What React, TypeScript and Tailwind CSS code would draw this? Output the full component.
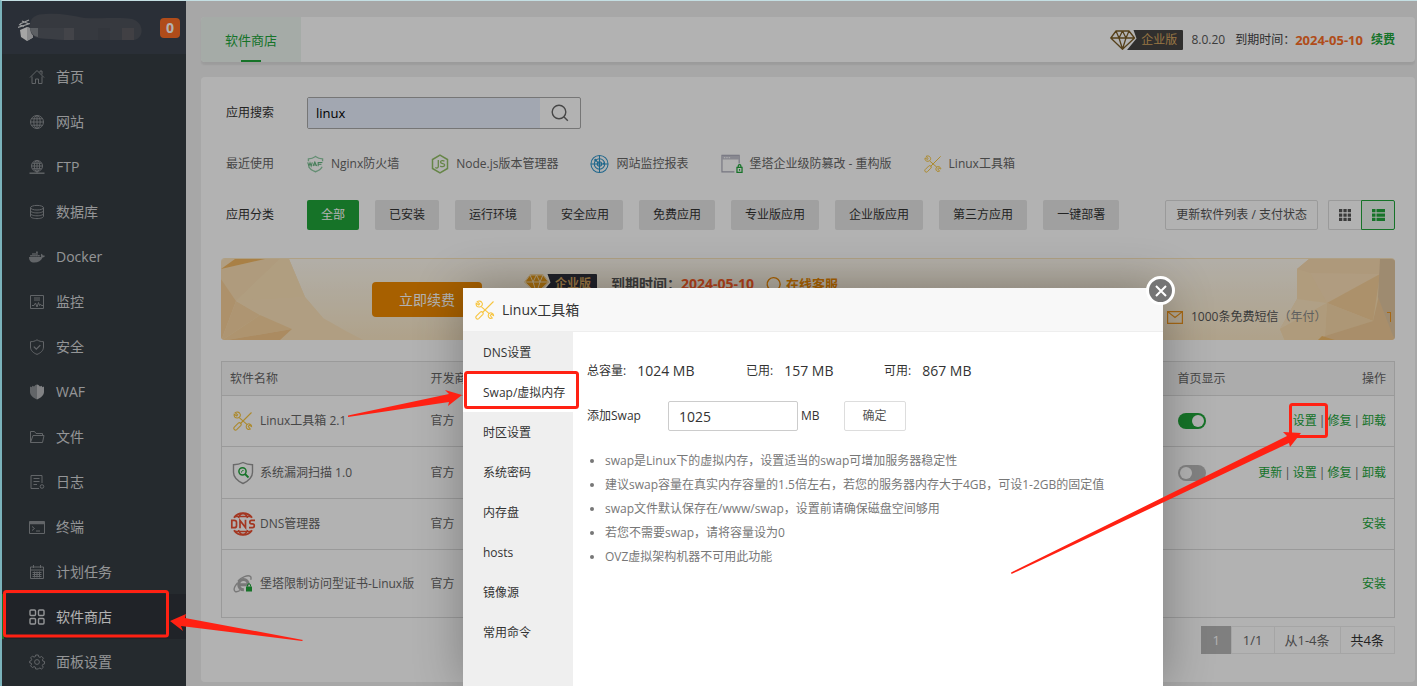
import React, { useState } from "react";
import { FaDocker } from "react-icons/fa";

type IconProps = { className?: string };

const Line: React.FC<{ children: React.ReactNode; size?: string }> = ({
  children,
  size = "w-4 h-4",
}) => (
  <svg viewBox="0 0 16 16" className={size} fill="none" stroke="currentColor" aria-hidden="true">
    {children}
  </svg>
);

const menu: { label: string; icon: React.ReactNode }[] = [
  {
    label: "首页",
    icon: (
      <Line>
        <path d="M1 8.5 8 1.5l7 7M3 7.5v7h3.5V10h3v4.500H13v-7M11 3.500V2h2v3.500" />
      </Line>
    ),
  },
  {
    label: "网站",
    icon: (
      <Line>
        <circle cx="8" cy="8" r="6.500" />
        <ellipse cx="8" cy="8" rx="3.200" ry="6.500" />
        <path d="M8 1.500v13M1.500 8h13M2.500 4.800h11M2.500 11.200h11" />
      </Line>
    ),
  },
  {
    label: "FTP",
    icon: (
      <Line>
        <circle cx="8" cy="7" r="5.500" />
        <ellipse cx="8" cy="7" rx="2.700" ry="5.500" />
        <path d="M8 1.500v13M2.500 7h11M3.500 4.300h9M3.500 9.700h9" />
        <path d="M.5 14.200h15" strokeWidth="1.400" />
      </Line>
    ),
  },
  {
    label: "数据库",
    icon: (
      <Line>
        <ellipse cx="8" cy="3.700" rx="6.500" ry="2.300" />
        <path d="M1.500 3.700v8.600c0 1.300 2.900 2.300 6.500 2.300s6.500-1 6.500-2.300V3.700M1.500 6.600c0 1.300 2.900 2.300 6.500 2.300s6.500-1 6.500-2.300M1.500 9.500c0 1.300 2.900 2.300 6.500 2.300s6.500-1 6.500-2.300" />
      </Line>
    ),
  },
  { label: "Docker", icon: <FaDocker className="w-4 h-4" /> },
  {
    label: "监控",
    icon: (
      <Line>
        <path d="M1.500 1.500h13v13h-13zM5 4h6M5 6h6M3 11.500h2L6.500 9 8 13l1.500-4.500 1 3 1-1.500.8 1.500H14" />
      </Line>
    ),
  },
  {
    label: "安全",
    icon: (
      <Line>
        <path d="M8 .8c2 1.400 4.200 1.900 6.500 1.900V8c0 3.500-2.800 6-6.500 7.400C4.300 14 1.500 11.500 1.500 8V2.700C3.800 2.700 6 2.200 8 .8z" />
        <path d="m4.800 7.600 2.500 2.500 4-4" strokeWidth="1.300" />
      </Line>
    ),
  },
  {
    label: "WAF",
    icon: (
      <Line>
        <path d="M8 .5v15C4 14 1 11 1 8V2.500l1.500.8 1-1.500 1.500.8L6.500 1z" fill="currentColor" stroke="none" />
        <path d="M8 .5v15c4-1.500 7-4.500 7-7.500V2.500l-1.500.8-1-1.500-1.500.8L9.500 1z" fill="#b9bbbe" stroke="none" />
      </Line>
    ),
  },
  {
    label: "文件",
    icon: (
      <Line>
        <path d="M1.500 13.500v-11h4l1.500 2h6.500v2M1.500 13.500l2.500-7h11l-1.500 7z" strokeLinejoin="round" />
      </Line>
    ),
  },
  {
    label: "日志",
    icon: (
      <Line>
        <path d="M13 9V1.500H2v13h8M4.500 4.500h6M4.500 7.500h6M4.500 10.500H8" />
        <circle cx="13" cy="12.500" r="1.800" />
      </Line>
    ),
  },
  {
    label: "终端",
    icon: (
      <Line>
        <path d="M.5 2.500h15v12H.5zM3 7.500l2.500 2L3 11.500M7 12h4" />
        <path d="M.5 4h15" strokeWidth="2.500" />
      </Line>
    ),
  },
  {
    label: "计划任务",
    icon: (
      <Line>
        <path d="M1.500 3h13v11.500h-13zM1.500 6h13M4.500 1v3M11.500 1v3M3.500 8.500h9M3.500 10.500h9M3.500 12.500h9M5.500 7.500v6M8 7.500v6M10.500 7.500v6" />
      </Line>
    ),
  },
  {
    label: "软件商店",
    icon: (
      <Line>
        <g strokeWidth="1.400">
          <rect x="1" y="1" width="5.500" height="5.500" rx="1" />
          <rect x="9.500" y="1" width="5.500" height="5.500" rx="1" />
          <rect x="1" y="9.500" width="5.500" height="5.500" rx="1" />
          <rect x="9.500" y="9.500" width="5.500" height="5.500" rx="1" />
        </g>
      </Line>
    ),
  },
  {
    label: "面板设置",
    icon: (
      <Line>
        <path d="M6.700 1h2.600l.4 1.800 1.300.6 1.600-1 1.800 1.800-1 1.600.5 1.300 1.600.4v2.400l-1.700.5-.5 1.200 1 1.700-1.800 1.700-1.600-1-1.300.6L9.300 15H6.700l-.4-1.900-1.300-.5-1.600 1-1.800-1.800 1-1.600-.6-1.200L.6 8.800V7.200l1.500-.5.6-1.300-1-1.600 1.700-1.700 1.700 1 1.200-.5z" />
        <circle cx="8" cy="8" r="2.400" />
      </Line>
    ),
  },
];

const ToolboxIcon: React.FC<IconProps> = ({ className }) => (
  <svg viewBox="0 0 20 20" className={className} fill="none" stroke="#f7c540" strokeWidth="1.100" aria-hidden="true">
    <path d="M18.500 1.500 7.500 12.500M6.500 6.800l8 7" />
    <path d="M5.300 12.200 1.300 16.200a1.700 1.700 0 0 0 2.400 2.400l4-4a1.700 1.700 0 0 0-2.400-2.400z" />
    <path d="M2.200 1.600 4.600 3.800 3.800 5 1.200 3.200C.6 5.500 2.200 7.300 4.600 7c2.500-.3 3.500-2.800 2.300-4.500C6 1 3.800.6 2.200 1.600z" />
    <path d="m18.600 15.600-2.300-1.400-1 1.300 2 2.500c-2 1-4.200-.3-4.100-2.600.1-2 2.200-3.300 4-2.200 1 .5 1.500 1.400 1.400 2.400z" />
  </svg>
);

const WafIcon: React.FC<IconProps> = ({ className }) => (
  <svg viewBox="0 0 18 18" className={className} fill="none" aria-hidden="true">
    <path
      d="M1.500 6V3.500C4.500 3.500 7 2.500 9 1c2 1.500 4.500 2.500 7.500 2.500V6M2 12c1.200 2.500 3.700 4.200 7 5.200 3.300-1 5.800-2.700 7-5.200"
      stroke="#8fcba4"
      strokeWidth="1.400"
    />
    <path
      d="m.8 7.200 1.200 4 1.200-3.500 1.200 3.500 1.200-4M6.400 11.200 8.300 7l1.900 4.200M7 10h2.500M11.800 11.500V7.400h4.500M11.800 9.300h3.500"
      stroke="#62b37e"
      strokeWidth="1.100"
    />
  </svg>
);

const NodeIcon: React.FC<IconProps> = ({ className }) => (
  <svg viewBox="0 0 18 20" className={className} fill="none" stroke="#93bf66" aria-hidden="true">
    <path d="M9 1.200 16.500 5.500v9L9 18.800 1.500 14.500v-9z" strokeWidth="1.500" />
    <path d="M7.300 6v6.500c0 1.500-1.500 2-3 1M13.500 7.300c-1.200-1-4-.8-4 .8 0 2.200 4.200 1 4.200 3 0 1.900-3.200 2-4.500.8" strokeWidth="1.300" />
  </svg>
);

const RadarIcon: React.FC<IconProps> = ({ className }) => (
  <svg viewBox="0 0 20 20" className={className} fill="none" stroke="#2d93c8" strokeWidth="1.100" aria-hidden="true">
    <circle cx="10" cy="10" r="9" />
    <circle cx="10" cy="10" r="5.500" />
    <circle cx="10" cy="10" r="2.300" />
    <path d="M10 1v18M1 10h18M6 6l3 3" />
    <circle cx="5.700" cy="5.700" r="1.300" fill="#2d93c8" stroke="none" />
    <circle cx="14.500" cy="9.500" r="1" fill="#2d93c8" stroke="none" />
  </svg>
);

const TamperIcon: React.FC<IconProps> = ({ className }) => (
  <svg viewBox="0 0 23 20" className={className} fill="none" aria-hidden="true">
    <path d="M14 18.300H1V1h18v8.500" stroke="#a9a9b8" strokeWidth="1.200" />
    <path d="M1 3.300h18" stroke="#c3c3ce" strokeWidth="4" />
    <path d="M3 3.300h7" stroke="#f5f5f8" strokeWidth="1.200" strokeDasharray="1.500 1" />
    <path d="M16.700 13.500h5.300v5.300h-5.300zM18 13.500V12a1.400 1.400 0 0 1 2.800 0v1.500M19.400 15.200v1.800" stroke="#20a53a" strokeWidth="1.300" />
  </svg>
);

const ScanIcon: React.FC<IconProps> = ({ className }) => (
  <svg viewBox="0 0 22 24" className={className} fill="none" aria-hidden="true">
    <path
      d="M11 1.500c3 1.600 6 2.200 9.500 2.200v7.500c0 5-4 8.600-9.500 11.300-5.500-2.700-9.500-6.300-9.500-11.300V3.700C5 3.700 8 3.100 11 1.500z"
      stroke="#999"
      strokeWidth="1.400"
    />
    <circle cx="10.500" cy="10.300" r="3.600" stroke="#20a53a" strokeWidth="1.500" />
    <path d="m13 13 3.500 3.500" stroke="#20a53a" strokeWidth="1.800" />
    <path d="M9.500 11.500c0-1.500.7-2 2-2" stroke="#20a53a" />
  </svg>
);

const DnsIcon: React.FC<IconProps> = ({ className }) => (
  <svg viewBox="0 0 26 24" className={className} fill="none" stroke="#ea4f31" aria-hidden="true">
    <path d="M4 5.800C6 2.800 9 1.200 13 1.200s7 1.600 9 4.600M4 18.200c2 3 5 4.600 9 4.600s7-1.600 9-4.600" strokeWidth="1.900" />
    <path d="M8.500 6C9.300 3.500 10.800 1.500 13 1.500S16.700 3.500 17.500 6M8.500 18c.8 2.500 2.300 4.500 4.500 4.500s3.700-2 4.500-4.500M5 4.500h16M5 19.500h16" strokeWidth="1.500" />
    <path d="M1 8.300h3.200c1.700 0 2.300.7 2.300 2v3.400c0 1.300-.6 2-2.300 2H1.800V8.300M10 16.300V8.500l5.500 7V7.700M25 8.300h-3.500c-2.300 0-2.300 3.500 0 3.500h1c2.400 0 2.400 3.900 0 3.900H19" strokeWidth="1.700" />
  </svg>
);

const CertIcon: React.FC<IconProps> = ({ className }) => (
  <svg viewBox="0 0 20 18" className={className} fill="none" aria-hidden="true">
    <path d="M15.500 9.800H6M15.300 9.800c0-3.300-2-5.300-4.800-5.300S5.700 6.500 5.700 9.600s2 5.200 5.200 5.200" stroke="#adadad" strokeWidth="3" />
    <path d="M5 6C8 2.500 15-.5 17.500 1.500c.8.800.6 2 .2 3.200M4.500 8C1.500 11.500.5 15 2 16.300c1.200.8 3.200.2 5-.8" stroke="#adadad" strokeWidth="1.400" />
    <path d="M13 11.500h6v5h-6z" fill="#20a53a" />
    <path d="M14.500 11.500V10c0-1.600 3-1.600 3 0v1.500" stroke="#20a53a" />
  </svg>
);

const VipBadge: React.FC<{ filled?: boolean }> = ({ filled }) => (
  <span className="relative block w-[73px] h-5 shrink-0">
    <svg viewBox="0 0 73 20" className="absolute inset-0 w-full h-full" fill="none" aria-hidden="true">
      <path d="M23.500 0H72a1 1 0 0 1 1 1v18a1 1 0 0 1-1 1H17l9.500-11.500z" fill={filled ? "#2e303c" : "#454443"} />
      {filled && <path d="M6 .5h13L25 8 12.500 19.800.3 8z" fill="#e89a16" />}
      <path
        d="M6 1h13l5.500 7L12.500 19.300.8 8zM.8 8h23.700M6 1l3 7 3.500 11L16 8l3-7M12.500 1 9 8M12.500 1 16 8"
        stroke={filled ? "#fbe9c6" : "#7a5c26"}
        strokeWidth={filled ? 0.9 : 1.3}
        strokeLinejoin="round"
      />
    </svg>
    <span className="absolute right-1.5 top-0 text-xs leading-5 text-[#d9a860]">企业版</span>
  </span>
);

const recent = [
  { label: "Nginx防火墙", icon: <WafIcon className="w-[17px] h-[18px]" /> },
  { label: "Node.js版本管理器", icon: <NodeIcon className="w-[18px] h-5" /> },
  { label: "网站监控报表", icon: <RadarIcon className="w-[19px] h-5" /> },
  { label: "堡塔企业级防篡改 - 重构版", icon: <TamperIcon className="w-[22px] h-5" /> },
  { label: "Linux工具箱", icon: <ToolboxIcon className="w-[18px] h-[18px]" /> },
];

const categories = ["全部", "已安装", "运行环境", "安全应用", "免费应用", "专业版应用", "企业版应用", "第三方应用", "一键部署"];

type Row = {
  name: string;
  icon: React.ReactNode;
  actions: string[];
  home?: boolean;
  height: string;
};

const rows: Row[] = [
  {
    name: "Linux工具箱 2.1",
    icon: <ToolboxIcon className="w-5 h-5" />,
    home: true,
    actions: ["设置", "修复", "卸载"],
    height: "h-[51px]",
  },
  {
    name: "系统漏洞扫描 1.0",
    icon: <ScanIcon className="w-[22px] h-6" />,
    home: false,
    actions: ["更新", "设置", "修复", "卸载"],
    height: "h-[52px]",
  },
  { name: "DNS管理器", icon: <DnsIcon className="w-[26px] h-6" />, actions: ["安装"], height: "h-[51px]" },
  {
    name: "堡塔限制访问型证书-Linux版",
    icon: <CertIcon className="w-5 h-[18px]" />,
    actions: ["安装"],
    height: "h-[68px]",
  },
];

const tabs = ["DNS设置", "Swap/虚拟内存", "时区设置", "系统密码", "内存盘", "hosts", "镜像源", "常用命令"];

const tips = [
  "swap是Linux下的虚拟内存，设置适当的swap可增加服务器稳定性",
  "建议swap容量在真实内存容量的1.5倍左右，若您的服务器内存大于4GB，可设1-2GB的固定值",
  "swap文件默认保存在/www/swap，设置前请确保磁盘空间够用",
  "若您不需要swap，请将容量设为0",
  "OVZ虚拟架构机器不可用此功能",
];

const Sidebar: React.FC = () => (
  <aside className="w-[184px] shrink-0 bg-[#363d43] text-[#d4d6d8]">
    <div className="flex items-center h-[53px] pl-4 pr-1.5 bg-[#3d444f]">
      <svg viewBox="0 0 128 30" className="w-32 h-[30px]" aria-hidden="true">
        <path d="M2 11l9-4M0 14.500l12-4M4 8l7 3M1 11.500l5 2" stroke="#dfe1e3" strokeWidth="1.300" />
        <path d="M2 17l7-3 6 2v8.500L9 28l-6-4z" fill="#ededed" />
        <path d="M9 14v14l6-3.500V16z" fill="#c4c6c9" />
        <path
          d="M12 13C12 4 18 1 28 1c12-1 24 1 38 4 18 1 36-1 48 1 12 3 13 19 2 21H46c-10-1-19-1-26-2-6-1-8-6-8-12z"
          fill="#4e525b"
        />
        <path d="M12 15h8v9c-5-1-7-4-8-9z" fill="#85898f" />
        <path d="M20 15h26v12c-8-1-17-1-26-2z" fill="#555962" />
        <path d="M46 15h10v12H46z" fill="#606269" />
        <path d="M104 15h12v12h-12z" fill="#5d5c62" />
        <path d="M80 15h12v12H80z" fill="#4a4e57" />
      </svg>
      <span className="ml-auto flex items-center justify-center w-5 h-5 rounded bg-[#fc6d26] text-white text-sm leading-5 font-bold">
        0
      </span>
    </div>
    <nav>
      {menu.map((item) => {
        const active = item.label === "软件商店";
        return (
          <a
            key={item.label}
            href="#"
            className={`flex items-center gap-[11px] h-[45px] border-l-2 pl-[25px] text-sm leading-5 ${
              active ? "bg-[#2f333a] border-[#20a53a] text-white" : "border-transparent"
            }`}
          >
            <span className={active ? "text-[#d4d6d8]" : "text-[#8d9195]"}>{item.icon}</span>
            {item.label}
          </a>
        );
      })}
    </nav>
  </aside>
);

const TopBar: React.FC = () => (
  <header className="flex h-[45px] rounded bg-white shadow-[0_3px_2px_rgba(0,0,0,0.07)]">
    <a
      href="#"
      className="flex flex-col items-center w-[100px] rounded-l bg-[#ecf5ef] text-[#20a53a] text-[13px] leading-5 pt-[13px]"
    >
      软件商店
      <span className="mt-auto w-5 h-0.5 bg-[#20a53a]" />
    </a>
    <div className="ml-auto flex items-center pr-5 text-xs leading-5 text-[#555]">
      <VipBadge />
      <span className="ml-2">8.0.20</span>
      <span className="ml-2.5 text-[#444]">到期时间：</span>
      <b className="text-[13px] text-[#fc6d26]">2024-05-10</b>
      <a href="#" className="ml-2 font-bold text-[#20a53a]">
        续费
      </a>
    </div>
  </header>
);

const Banner: React.FC = () => (
  <section className="relative flex mt-7 h-[82px] rounded border-t border-[#fbe6be] bg-linear-to-b from-[#fffaf0] to-[#fbe8c6] overflow-hidden">
    <svg viewBox="0 0 144 82" className="absolute left-0 top-0 w-36 h-[82px]" aria-hidden="true">
      <path d="M0 0h68l16 38 18 21 23 13 19 10H0z" fill="#fce3bb" />
      <path d="M0 10 44 0h15L15 42 0 20z" fill="#fbdfb3" />
      <path d="M0 10 14 0h30z" fill="#f3b863" />
      <path d="M59 0h9l16 38-69 4z" fill="#fce2b8" />
      <path d="M0 20 15 42 0 82z" fill="#f8d09a" />
      <path d="M15 42 0 82l39-26z" fill="#fad6a4" />
      <path d="M0 82 39 56l32 14-71 12z" fill="#fad5a0" />
      <path d="M71 70 0 82h58z" fill="#f5c88c" />
      <path d="M15 42l69-4 18 21-63-3z" fill="#fce3bb" />
    </svg>
    <svg viewBox="0 0 116 82" className="absolute right-0 top-0 w-[116px] h-[82px]" aria-hidden="true">
      <path d="M18 10 30 0h86v82H6l-5-12 17-30z" fill="#fbdfb0" />
      <path d="M30 0h71v15H31L18 10z" fill="#fadbb0" />
      <path d="M31 14l70 1-53 29z" fill="#fce0b8" />
      <path d="M31 14 18 10v30l30 4z" fill="#fce0b4" />
      <path d="M18 40 1 70l47-26z" fill="#fde5c0" />
      <path d="M48 44l53-29-7 47z" fill="#f7d09a" />
      <path d="M48 44l46 18-48 15z" fill="#f8d8aa" />
      <path d="M1 70l47-26-2 33-40 5z" fill="#fbdfb2" />
      <path d="M38 82l8-5 48-15 7-30 15 50z" fill="#f2cc98" />
      <path d="M101 0h15v82L99 38z" fill="#e3c7a1" />
      <path d="M43 77l16 5H38z" fill="#f3bd6d" />
    </svg>
    <button
      type="button"
      className="ml-[151px] mt-[23px] w-[110px] h-[35px] rounded-sm bg-[#f08a00] text-white text-sm leading-5"
    >
      立即续费
    </button>
    <div className="flex items-center h-5 mt-[15px] ml-[42px] text-sm leading-5 font-bold text-[#555]">
      <VipBadge filled />
      <span className="ml-3.5">到期时间：</span>
      <span className="text-[#fc5d26]">2024-05-10</span>
      <svg viewBox="0 0 16 16" className="ml-3 w-4 h-4" fill="none" stroke="#f08a00" strokeWidth="1.400" aria-hidden="true">
        <path d="M4 13.500A6.500 6.500 0 1 1 12 13l3 2" />
      </svg>
      <a href="#" className="ml-1 text-[13px] text-[#f08a00]">
        在线客服
      </a>
    </div>
    <div className="relative ml-auto flex items-center h-5 mt-12 w-[228px] text-xs leading-5 text-[#555]">
      <svg viewBox="0 0 16 13" className="w-4 h-[13px] mr-2" fill="none" stroke="#f0961e" strokeWidth="1.200" aria-hidden="true">
        <path d="M.6.600h14.800v11.800H.6zM.6.600 8 6.500 15.400.6" />
      </svg>
      1000条免费短信<span className="text-[#888]">（年付）</span>
      <span className="ml-auto mr-1 w-1 h-2.5 border-t border-r border-[#f0961e]" />
    </div>
  </section>
);

const SoftTable: React.FC = () => (
  <table className="mt-[21px] w-full table-fixed border-collapse border border-[#ddd] text-xs leading-5 text-[#666]">
    <colgroup>
      <col className="w-[201px]" />
      <col />
      <col className="w-20" />
      <col className="w-[145px]" />
    </colgroup>
    <thead>
      <tr className="h-[34px] bg-[#f6f6f6] text-left">
        <th className="px-2 font-normal">软件名称</th>
        <th className="px-2 font-normal">开发商</th>
        <th className="px-2 font-normal">首页显示</th>
        <th className="px-2 font-normal text-right">操作</th>
      </tr>
    </thead>
    <tbody>
      {rows.map((row) => (
        <tr key={row.name} className={`border-t border-[#ddd] ${row.height}`}>
          <td className="pl-2">
            <div className="flex items-center gap-1 whitespace-nowrap">
              <span className="flex justify-center w-[26px]">{row.icon}</span>
              {row.name}
            </div>
          </td>
          <td className="px-2">官方</td>
          <td className="px-2">
            {row.home !== undefined && (
              <label className="flex">
                <input type="checkbox" defaultChecked={row.home} aria-label="首页显示" className="peer sr-only" />
                <span className="flex w-7 h-4 rounded-full p-0.5 bg-[#bbb] peer-checked:bg-[#20a53a] peer-checked:justify-end">
                  <span className="w-3 h-3 rounded-full bg-white" />
                </span>
              </label>
            )}
          </td>
          <td className="px-2">
            <div className="flex justify-end gap-0.5 whitespace-nowrap">
              {row.actions.map((action, i) => (
                <React.Fragment key={action}>
                  {i > 0 && <span>|</span>}
                  <a href="#" className="text-[#20a53a]">
                    {action}
                  </a>
                </React.Fragment>
              ))}
            </div>
          </td>
        </tr>
      ))}
    </tbody>
  </table>
);

const SoftStore: React.FC = () => {
  const [keyword, setKeyword] = useState("linux");
  const [category, setCategory] = useState("全部");

  return (
    <main className="mt-[15px] rounded bg-white px-5 pt-5 pb-7 text-xs leading-5 text-[#333]">
      <div className="flex items-center pl-[5px]">
        <label htmlFor="keyword" className="w-[81px]">
          应用搜索
        </label>
        <div className="flex w-[274px] h-8 rounded-xs border border-[#aaa]">
          <input
            id="keyword"
            value={keyword}
            onChange={(e) => setKeyword(e.target.value)}
            className="flex-1 min-w-0 px-2 bg-[#e8f0fe] text-[13px] text-black outline-none"
          />
          <button type="button" aria-label="搜索" className="flex items-center justify-center w-10 text-[#666]">
            <svg viewBox="0 0 18 18" className="w-[18px] h-[18px]" fill="none" stroke="currentColor" strokeWidth="1.400" aria-hidden="true">
              <circle cx="8" cy="8" r="6.800" />
              <path d="m12.800 12.800 4 4" />
            </svg>
          </button>
        </div>
      </div>

      <div className="flex items-center h-5 mt-[25px] pl-[5px] text-[#666] whitespace-nowrap">
        <span className="w-[81px]">最近使用</span>
        <div className="flex gap-8">
          {recent.map((item) => (
            <a key={item.label} href="#" className="flex items-center gap-[7px]">
              {item.icon}
              {item.label}
            </a>
          ))}
        </div>
      </div>

      <div className="flex items-center mt-[26px] pl-[5px] whitespace-nowrap">
        <span className="w-[81px]">应用分类</span>
        <div className="flex gap-4">
          {categories.map((item) => (
            <button
              key={item}
              type="button"
              onClick={() => setCategory(item)}
              className={`h-[30px] px-3.5 rounded-xs ${
                item === category ? "bg-[#20a53a] text-white" : "bg-[#e5e5e5]"
              }`}
            >
              {item}
            </button>
          ))}
        </div>
        <button type="button" className="ml-auto h-[30px] px-2.5 rounded-xs border border-[#ddd] text-[#555]">
          更新软件列表 / 支付状态
        </button>
        <div className="flex ml-2.5">
          <button
            type="button"
            aria-label="网格"
            className="flex items-center justify-center w-[33px] h-[30px] rounded-l-xs border border-r-0 border-[#ddd] text-[#555]"
          >
            <svg viewBox="0 0 12 12" className="w-3 h-3" fill="currentColor" aria-hidden="true">
              <path d="M0 0h3.300v3.300H0zM4.400 0h3.300v3.300H4.400zM8.700 0H12v3.300H8.700zM0 4.400h3.300v3.300H0zM4.400 4.400h3.300v3.300H4.400zM8.700 4.400H12v3.300H8.700zM0 8.700h3.300V12H0zM4.400 8.700h3.300V12H4.400zM8.700 8.700H12V12H8.700z" />
            </svg>
          </button>
          <button
            type="button"
            aria-label="列表"
            className="flex items-center justify-center w-[34px] h-[30px] rounded-r-xs border border-[#20a53a] bg-[#edf5ef] text-[#20a53a]"
          >
            <svg viewBox="0 0 13 12" className="w-[13px] h-3" fill="currentColor" aria-hidden="true">
              <path d="M0 0h3.500v3.300H0zM4.500 0H13v3.300H4.500zM0 4.400h3.500v3.300H0zM4.500 4.400H13v3.300H4.500zM0 8.700h3.500V12H0zM4.500 8.700H13V12H4.500z" />
            </svg>
          </button>
        </div>
      </div>

      <Banner />
      <SoftTable />

      <div className="flex justify-end mt-2 text-[13px]">
        <span className="flex items-center h-7 px-[11px] bg-[#b6b6b6] text-white">1</span>
        <span className="flex items-center h-7 px-[11px] border border-r-0 border-[#ececec] text-[#666]">1/1</span>
        <span className="flex items-center h-7 px-2.5 border border-r-0 border-[#ececec] text-[#666]">从1-4条</span>
        <span className="flex items-center h-7 px-2.5 border border-[#ececec]">共4条</span>
      </div>
    </main>
  );
};

const Capacity: React.FC<{ label: string; value: string; width: string }> = ({ label, value, width }) => (
  <div className={`flex items-center gap-[11px] ${width}`}>
    <span>{label}</span>
    <span className="text-sm leading-5">{value}</span>
  </div>
);

const ToolboxDialog: React.FC = () => {
  const [tab, setTab] = useState("Swap/虚拟内存");
  const [size, setSize] = useState("1025");

  return (
    <div
      role="dialog"
      aria-label="Linux工具箱"
      className="absolute left-[461px] top-[287px] bottom-0 w-[700px] flex flex-col rounded-t-xs bg-white text-xs leading-5 text-[#333] shadow-[1px_1px_50px_rgba(0,0,0,0.3)]"
    >
      <div className="flex items-center gap-[7px] h-11 pl-3 border-b border-[#eee] bg-[#f8f8f8] text-sm leading-5">
        <ToolboxIcon className="w-5 h-5" />
        Linux工具箱
      </div>
      <button
        type="button"
        aria-label="关闭"
        className="absolute -right-3 -top-3 flex items-center justify-center w-[29px] h-[29px] rounded-full border-3 border-white bg-[#757575]"
      >
        <svg viewBox="0 0 12 12" className="w-3 h-3" stroke="#fff" strokeWidth="2" aria-hidden="true">
          <path d="m1 1 10 10M11 1 1 11" />
        </svg>
      </button>
      <div className="flex flex-1">
        <div className="w-[110px] bg-[#efefef]">
          {tabs.map((item) => (
            <button
              key={item}
              type="button"
              onClick={() => setTab(item)}
              className={`block w-full h-10 pl-5 pt-0.5 text-left whitespace-nowrap ${item === tab ? "bg-white" : ""}`}
            >
              {item}
            </button>
          ))}
        </div>
        <div className="flex-1 pl-3.5 pt-[29px]">
          <div className="flex">
            <Capacity label="总容量:" value="1024 MB" width="w-[159px]" />
            <Capacity label="已用:" value="157 MB" width="w-[138px]" />
            <Capacity label="可用:" value="867 MB" width="w-[138px]" />
          </div>
          <div className="flex items-center mt-5">
            <label htmlFor="swap-size" className="w-[81px]">
              添加Swap
            </label>
            <input
              id="swap-size"
              value={size}
              onChange={(e) => setSize(e.target.value)}
              className="w-[130px] h-[30px] px-2.5 rounded-xs border border-[#ccc] text-sm leading-5 outline-none"
            />
            <span className="ml-[3px]">MB</span>
            <button type="button" className="ml-6 w-[62px] h-[30px] rounded-xs border border-[#ddd] text-[#555]">
              确定
            </button>
          </div>
          <ul className="mt-[18px] pl-[18px] list-disc leading-6 text-[#777]">
            {tips.map((tip) => (
              <li key={tip}>{tip}</li>
            ))}
          </ul>
        </div>
      </div>
    </div>
  );
};

// Red boxes and arrows pointing at the menu entry, the dialog tab and the settings link
const Marks: React.FC = () => (
  <svg
    width="1415"
    height="685"
    viewBox="2 1 1415 685"
    className="absolute left-0 top-0 pointer-events-none"
    fill="none"
    stroke="#ff2113"
    strokeWidth="3"
    aria-hidden="true"
  >
    <rect x="4.500" y="591.500" width="163" height="44.500" rx="2" />
    <rect x="465.500" y="372.500" width="112" height="35" rx="2" />
    <rect x="1290.500" y="404.500" width="36" height="32" rx="2" />
    <g fill="#ff2113" stroke="none">
      <path d="M170 621L186 614L185 618L303 640L302 641L181 626L183 631z" />
      <path d="M462 395L445 390L449 394L348 415.500L348 417L449 402L448 406z" />
      <path d="M1301 433L1283 432L1287 436L1011 572.500L1011.500 574L1289 443L1290 447z" />
    </g>
  </svg>
);

const App: React.FC = () => (
  <div className="relative flex h-screen overflow-hidden border-t border-l-2 border-t-[#c4dfe3] border-l-[#7bb3bb] bg-[#f0f0f0] font-['Open_Sans','Noto_Sans_CJK_SC',sans-serif]">
    <Sidebar />
    <div className="flex-1 min-w-0 pl-[15px] pr-0.5 pt-4">
      <TopBar />
      <SoftStore />
    </div>
    <div className="absolute inset-0 bg-black/30" />
    <ToolboxDialog />
    <Marks />
  </div>
);

export default App;
